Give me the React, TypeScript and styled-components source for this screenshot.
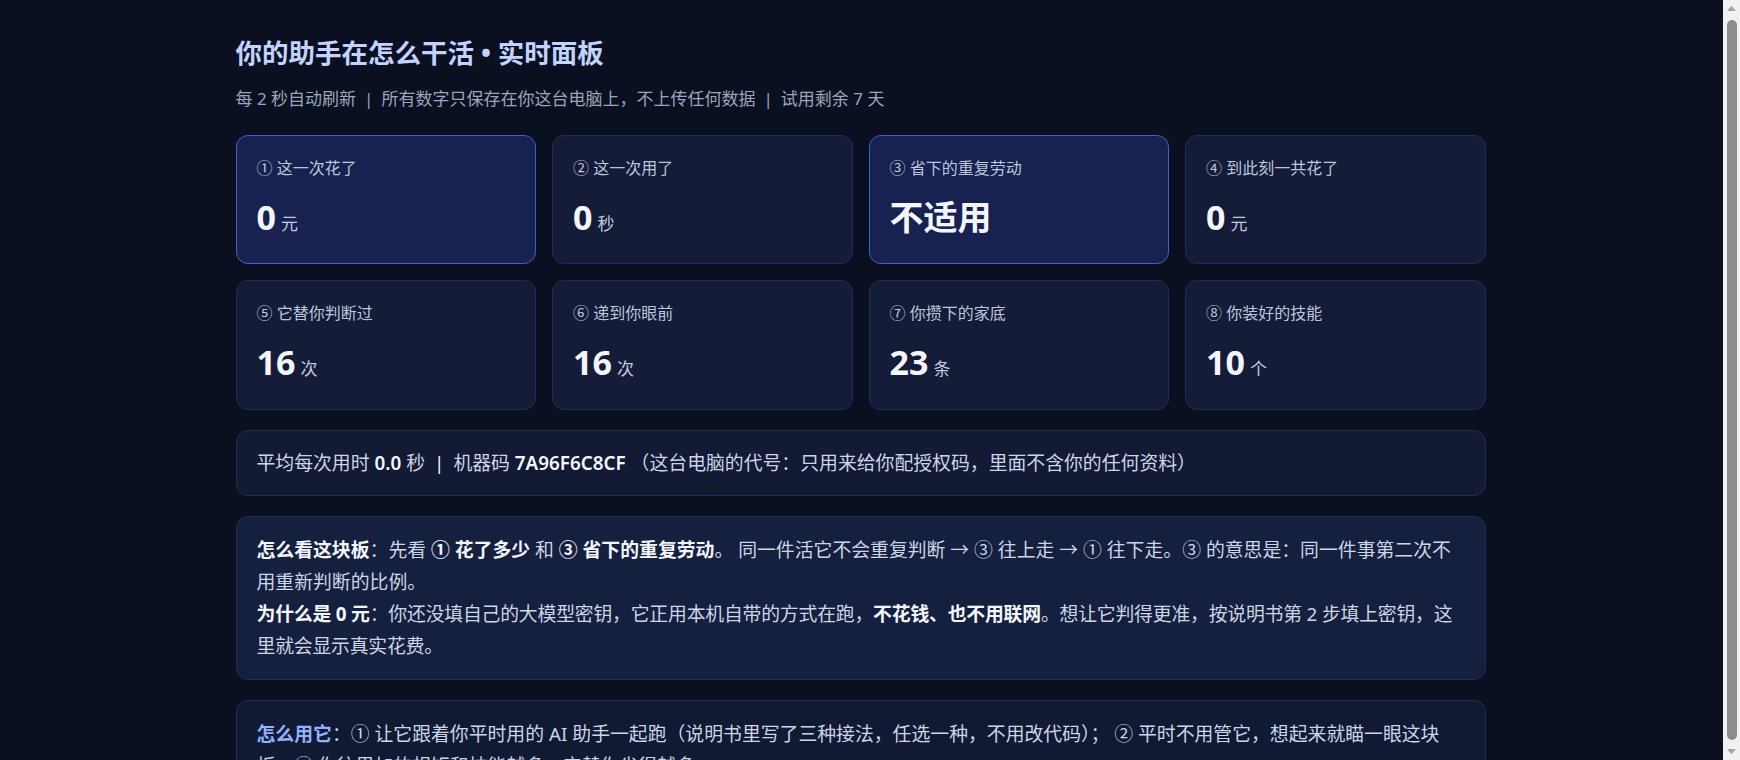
import styled, { createGlobalStyle } from "styled-components";

const GlobalStyle = createGlobalStyle`
  html, body {
    margin: 0;
    padding: 0;
    background: #0b1020;
  }
  body {
    padding-right: 19px;
    font-family: "Noto Sans", "Noto Sans CJK SC", sans-serif;
    color: #cdd5e6;
  }
`;

// the window's scroll rail, drawn over the right edge
const ScrollRail = styled.div`
  position: fixed;
  top: 0;
  right: 0;
  bottom: 0;
  width: 17px;
  background: #f1f1f1;
  display: flex;
  flex-direction: column;
  align-items: center;
`;

const RailArrow = styled.div<{ $down?: boolean }>`
  flex: none;
  height: 17px;
  display: flex;
  align-items: center;
  justify-content: center;
  color: #a3a3a3;
  transform: ${(p) => (p.$down ? "rotate(180deg)" : "none")};
`;

const RailThumb = styled.div`
  flex: 1;
  width: 10px;
  margin: 3px 0;
  border-radius: 5px;
  background: #8c8c8c;
`;

const Page = styled.div`
  max-width: 1250px;
  margin: 0 auto;
  padding: 36px 0 40px;
`;

const Title = styled.h1`
  margin: 0;
  font-size: 26.5px;
  line-height: 1.35;
  font-weight: 700;
  color: #c2d3ff;
`;

const Subtitle = styled.p`
  margin: 14px 0 0;
  font-size: 17px;
  line-height: 1.5;
  color: #9aa6bf;
`;

const Sep = styled.span`
  margin: 0 8px;
`;

const StatGrid = styled.div`
  display: grid;
  grid-template-columns: repeat(4, 1fr);
  gap: 16px;
  margin-top: 24px;
`;

const StatCard = styled.div<{ $hot?: boolean }>`
  background: ${(p) => (p.$hot ? "#172250" : "#141c37")};
  border: 1px solid ${(p) => (p.$hot ? "#3d62c9" : "#232e54")};
  border-radius: 12px;
  padding: 21px 20px 26px;
`;

const StatLabel = styled.div`
  font-size: 16px;
  line-height: 1.4;
  color: #bcc6dc;
`;

const StatValue = styled.div`
  margin-top: 17px;
  font-size: 34px;
  line-height: 1.2;
  font-weight: 700;
  color: #f3f6ff;
`;

const Unit = styled.span`
  margin-left: 5px;
  font-size: 17px;
  font-weight: 400;
  color: #c3cbdd;
`;

const Panel = styled.div<{ $tone?: "plain" | "note" | "dim" }>`
  margin-top: 20px;
  border-radius: 12px;
  border: 1px solid #222d51;
  background: ${(p) =>
    p.$tone === "note" ? "#14203d" : p.$tone === "dim" ? "#111a33" : "#121a34"};
  padding: ${(p) => (p.$tone === "plain" ? "16px 20px" : "17px 20px")};
  font-size: 18.85px;
  line-height: 32px;
  color: #cdd5e6;
`;

// one paragraph inside a panel; the long ones get slightly tighter tracking
const Para = styled.span<{ $tight?: boolean }>`
  letter-spacing: ${(p) => (p.$tight ? "-0.2px" : "normal")};
`;

const Strong = styled.b`
  color: #f3f6ff;
  font-weight: 700;
`;

const Lead = styled.b`
  color: #8fb2ff;
  font-weight: 700;
`;

const Bright = styled.span`
  color: #f3f6ff;
  font-weight: 600;
`;

const Bar = styled.span`
  margin: 0 9px;
  color: #f3f6ff;
`;

type Stat = { label: string; value: string; unit?: string; hot?: boolean };

const stats: Stat[] = [
  { label: "① 这一次花了", value: "0", unit: "元", hot: true },
  { label: "② 这一次用了", value: "0", unit: "秒" },
  { label: "③ 省下的重复劳动", value: "不适用", hot: true },
  { label: "④ 到此刻一共花了", value: "0", unit: "元" },
  { label: "⑤ 它替你判断过", value: "16", unit: "次" },
  { label: "⑥ 递到你眼前", value: "16", unit: "次" },
  { label: "⑦ 你攒下的家底", value: "23", unit: "条" },
  { label: "⑧ 你装好的技能", value: "10", unit: "个" },
];

const App = () => {
  return (
    <>
      <GlobalStyle />
      <Page>
        <Title>你的助手在怎么干活 • 实时面板</Title>
        <Subtitle>
          每 2 秒自动刷新<Sep>|</Sep>所有数字只保存在你这台电脑上，不上传任何数据
          <Sep>|</Sep>试用剩余 7 天
        </Subtitle>

        <StatGrid>
          {stats.map((s) => (
            <StatCard key={s.label} $hot={s.hot}>
              <StatLabel>{s.label}</StatLabel>
              <StatValue>
                {s.value}
                {s.unit ? <Unit>{s.unit}</Unit> : null}
              </StatValue>
            </StatCard>
          ))}
        </StatGrid>

        <Panel $tone="plain">
          平均每次用时 <Bright>0.0</Bright> 秒<Bar>|</Bar>机器码 <Bright>7A96F6C8CF</Bright>{" "}
          （这台电脑的代号：只用来给你配授权码，里面不含你的任何资料）
        </Panel>

        <Panel $tone="note">
          <Para>
            <Strong>怎么看这块板</Strong>：先看 <Strong>① 花了多少</Strong> 和{" "}
            <Strong>③ 省下的重复劳动</Strong>。 同一件活它不会重复判断 → ③ 往上走 → ① 往下走。③
            的意思是：同一件事第二次不用重新判断的比例。
          </Para>
          <br />
          <Para $tight>
            <Strong>为什么是 0 元</Strong>：你还没填自己的大模型密钥，它正用本机自带的方式在跑，
            <Strong>不花钱、也不用联网</Strong>。想让它判得更准，按说明书第 2 步填上密钥，这里就会显示真实花费。
          </Para>
        </Panel>

        <Panel $tone="dim">
          <Lead>怎么用它</Lead>：① 让它跟着你平时用的 AI 助手一起跑（说明书里写了三种接法，任选一种，不用改代码）；
          ② 平时不用管它，想起来就瞄一眼这块板；③ 你往里加的规矩和技能越多，它替你省得越多。
        </Panel>
      </Page>

      <ScrollRail>
        <RailArrow>
          <svg width="9" height="5" viewBox="0 0 9 5">
            <path d="M0 5 L4.5 0 L9 5 Z" fill="currentColor" />
          </svg>
        </RailArrow>
        <RailThumb />
        <RailArrow $down>
          <svg width="9" height="5" viewBox="0 0 9 5">
            <path d="M0 5 L4.5 0 L9 5 Z" fill="currentColor" />
          </svg>
        </RailArrow>
      </ScrollRail>
    </>
  );
};

export default App;
